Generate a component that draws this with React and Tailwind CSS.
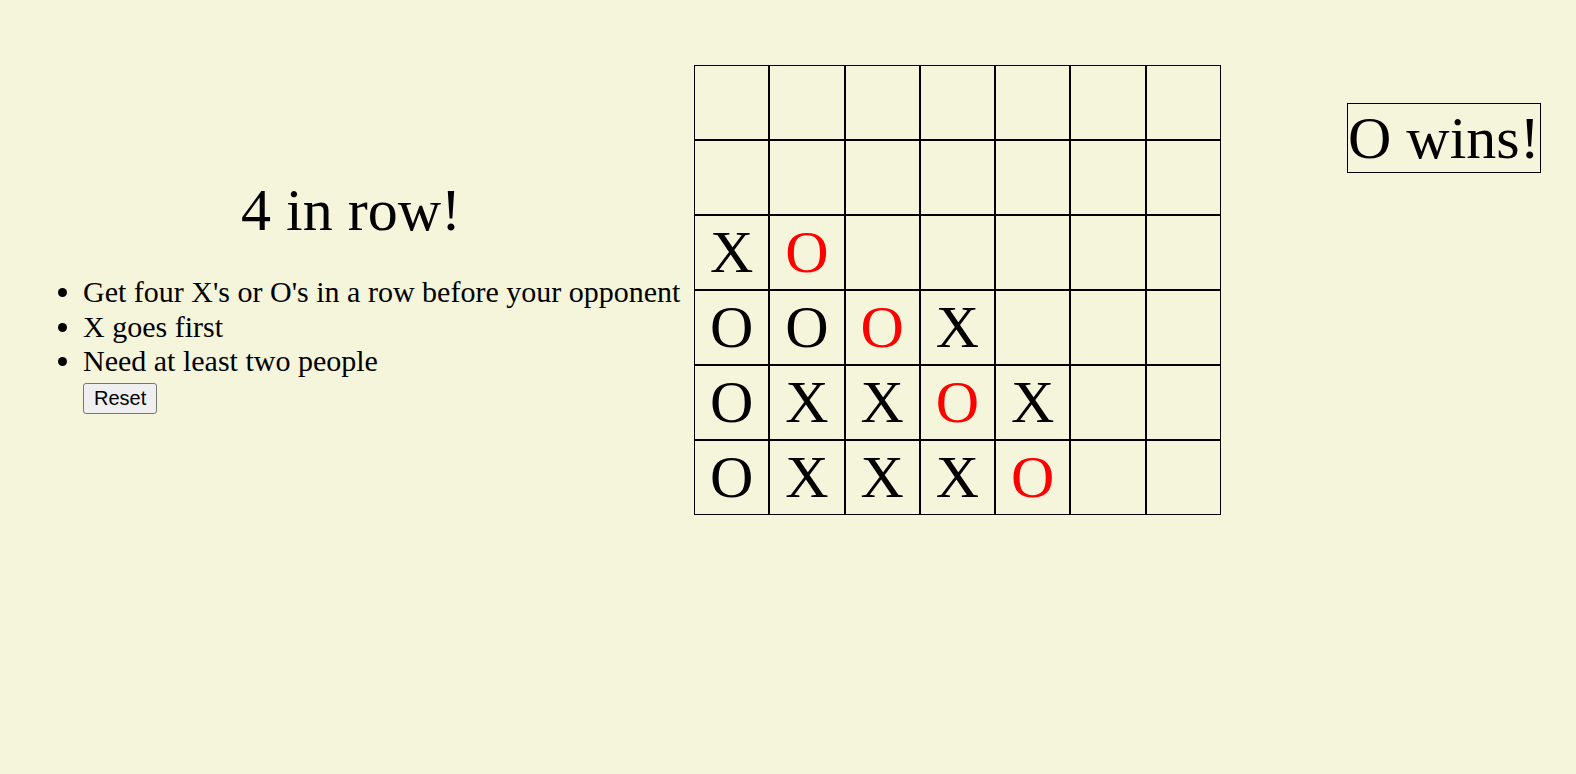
const BOARD = [
  ['', '', '', '', '', '', ''],
  ['', '', '', '', '', '', ''],
  ['X', 'o', '', '', '', '', ''],
  ['O', 'O', 'o', 'X', '', '', ''],
  ['O', 'X', 'X', 'o', 'X', '', ''],
  ['O', 'X', 'X', 'X', 'o', '', ''],
];

// lowercase 'o' marks the winning O's, drawn in red
const Cell = ({ v }) => (
  <div className="h-[75px] border border-black flex items-center justify-center leading-[69px] text-[60px]">
    {v === 'o' ? <span className="text-[#ff0000]">O</span> : v}
  </div>
);

export default function App() {
  return (
    <div className="min-h-screen bg-[#f5f5dc] text-black text-[30px] font-['Liberation_Serif','Times_New_Roman',serif]">
      <div className="flex items-center pt-[65px]">
        {/* Rules */}
        <div className="ml-[8px] w-[686px] shrink-0">
          <h1 className="mt-[40px] mb-[30px] text-center text-[60px] leading-[69px] font-normal">4 in row!</h1>
          <ul className="list-disc pl-[75px] mb-[30px] leading-[34.5px]">
            <li>Get four X's or O's in a row before your opponent</li>
            <li>X goes first</li>
            <li>Need at least two people</li>
            <button className="mt-[4px] block px-[10px] py-[3px] border border-[#767676] rounded-[3px] bg-[#efefef] text-[20px] leading-[23px] font-['Liberation_Sans',Arial,sans-serif]">
              Reset
            </button>
          </ul>
        </div>

        {/* Board */}
        <div className="grid grid-cols-7 w-[527px] shrink-0">
          {BOARD.flat().map((v, i) => <Cell key={i} v={v} />)}
        </div>

        {/* Status */}
        <div className="self-start mt-[38px] ml-[126px] border border-black text-[60px] leading-[68px] whitespace-nowrap">
          O wins!
        </div>
      </div>
    </div>
  );
}
